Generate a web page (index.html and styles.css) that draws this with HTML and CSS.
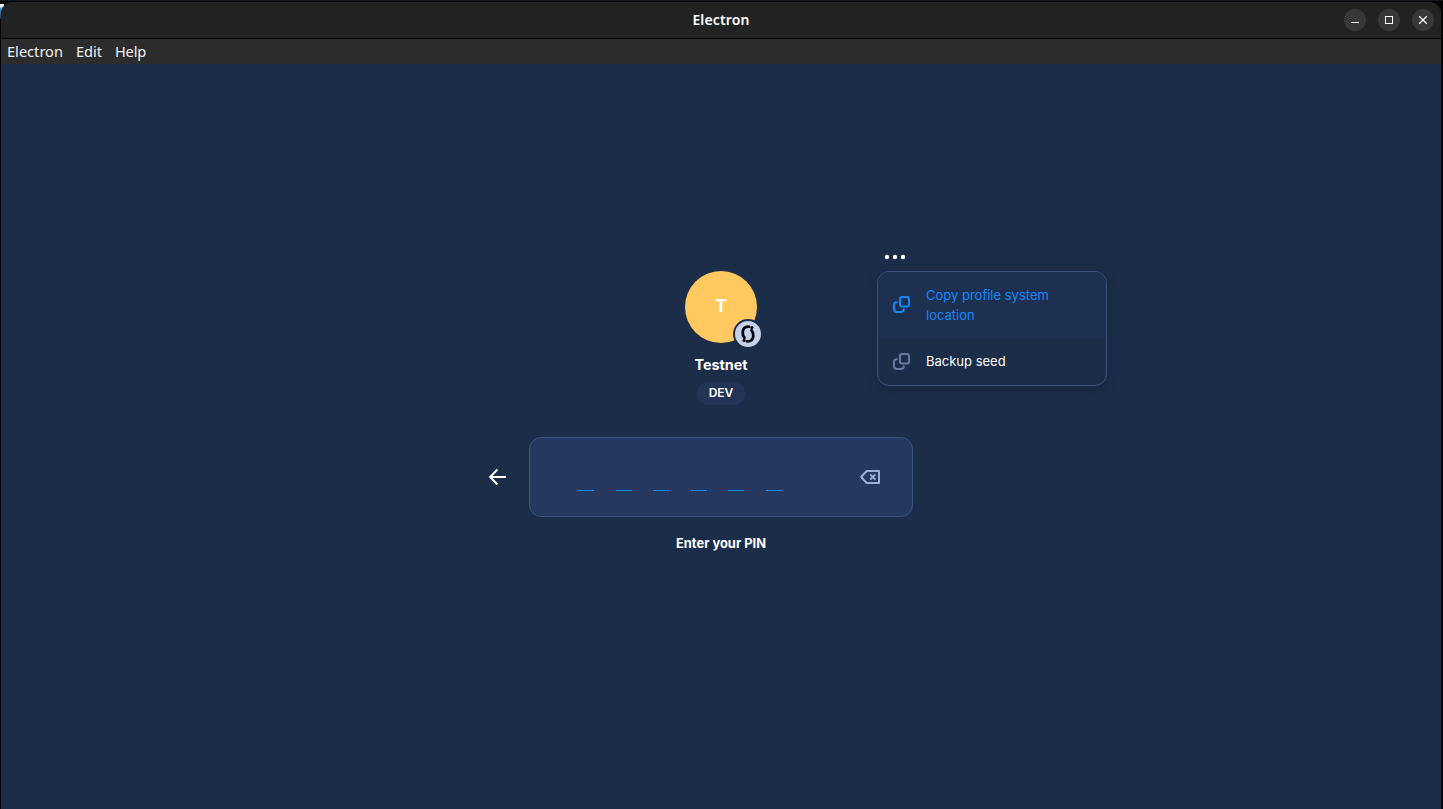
FILE: index.html
```html
<!DOCTYPE html>
<html lang="en">
<head>
<meta charset="utf-8">
<title>Electron</title>
<link rel="stylesheet" href="styles.css">
</head>
<body>
<div class="window">
  <header class="titlebar">
    <div class="titlebar-side"></div>
    <div class="title"><span class="title-text">Electron</span></div>
    <div class="controls">
      <span class="control"><svg width="22" height="22" viewBox="0 0 22 22"><path d="M7 13.5h8" stroke="#fff"/></svg></span>
      <span class="control"><svg width="22" height="22" viewBox="0 0 22 22"><rect x="7.5" y="7.5" width="7" height="7" fill="none" stroke="#fff"/></svg></span>
      <span class="control"><svg width="22" height="22" viewBox="0 0 22 22"><path d="M7.2 7.2l7.6 7.6M14.8 7.2l-7.6 7.6" stroke="#fff" stroke-width="1.3"/></svg></span>
    </div>
  </header>
  <nav class="menubar"><span class="m-electron">Electron</span><span class="m-edit">Edit</span><span class="m-help">Help</span></nav>
  <main class="content">
    <section class="login">
      <div class="profile">
        <div class="avatar">T
          <span class="network"><svg width="26" height="26" viewBox="0 0 26 26"><g fill="none" stroke="#05070c" stroke-width="2.8" stroke-linecap="round"><path d="M13.9 5.6C10 5.4 8 7.6 7.7 11C7.5 13.6 8 15.2 9.5 16.8"/><path d="M12.1 20.4C16 20.6 18 18.4 18.3 15C18.5 12.4 18 10.8 16.5 9.2"/></g><g fill="#05070c"><circle cx="16.9" cy="6.6" r="1.6"/><circle cx="9.1" cy="19.4" r="1.6"/></g></svg></span>
        </div>
        <div class="name">Testnet</div>
        <div class="tag">DEV</div>
        <div class="more">
          <svg class="dots" width="22" height="6" viewBox="0 0 22 6" fill="#fff"><circle cx="3" cy="3" r="2.2"/><circle cx="11" cy="3" r="2.2"/><circle cx="19" cy="3" r="2.2"/></svg>
          <div class="menu">
            <div class="item item-active">
              <svg class="copy" width="17" height="17" viewBox="0 0 17 17"><rect x="7" y="1" width="9" height="9.5" rx="2.2"/><path d="M3.8 6.2C2 6.3 1 7.4 1 9.1V13c0 1.8 1.2 3 3 3h3.8c1.8 0 3-1.1 3-2.8"/></svg>
              <span>Copy profile system location</span>
            </div>
            <div class="item">
              <svg class="copy" width="17" height="17" viewBox="0 0 17 17"><rect x="7" y="1" width="9" height="9.5" rx="2.2"/><path d="M3.8 6.2C2 6.3 1 7.4 1 9.1V13c0 1.8 1.2 3 3 3h3.8c1.8 0 3-1.1 3-2.8"/></svg>
              <span>Backup seed</span>
            </div>
          </div>
        </div>
      </div>
      <div class="pin-row">
        <svg width="18" height="18" viewBox="0 0 18 18" fill="none" stroke="#fff" stroke-width="2"><path d="M17 9H1.5M8.4 1.5L1.1 9l7.3 7.5"/></svg>
        <div class="pin">
          <div class="digits"><i></i><i></i><i></i><i></i><i></i><i></i></div>
          <svg width="20" height="14" viewBox="0 0 20 14" fill="none" stroke="#9dafd4" stroke-width="2" stroke-linejoin="round"><path d="M6.7 1H19v12H6.7L1.1 7z"/><path d="M10.2 4.4l5.2 5.2M15.4 4.4l-5.2 5.2"/></svg>
        </div>
      </div>
      <div class="hint">Enter your PIN</div>
    </section>
  </main>
</div>
</body>
</html>
```

FILE: styles.css
```css
* { box-sizing: border-box; }
body {
  margin: 0;
  height: 809px;
  padding: 2px 2px 0 1px;
  overflow: hidden;
  background:
    linear-gradient(#e4eaee 0 3px, #4c9cd0 4px, #17334a 15px) 0 4px / 4px 15px no-repeat,
    linear-gradient(#10151b 0 1px, #020304 1px);
  font-family: Inter, sans-serif;
  color: #fff;
}
.window {
  display: flex;
  flex-direction: column;
  height: 807px;
  overflow: hidden;
  border-radius: 12px 12px 0 0;
  background: #1c2d4a;
}
.titlebar {
  display: grid;
  grid-template-columns: 1fr auto 1fr;
  align-items: center;
  height: 37px;
  flex: none;
  background: #222;
  border-bottom: 1px solid #000;
}
.title {
  display: flex;
  justify-content: center;
  width: 100px;
  font: 600 14px/20px "Noto Sans", sans-serif;
  letter-spacing: .15px;
}
.controls { display: flex; justify-content: flex-end; gap: 12px; padding-right: 7px; }
.control { width: 22px; height: 22px; border-radius: 50%; background: #383838; }
.control svg { display: block; }
.menubar {
  display: flex;
  flex: none;
  height: 25px;
  padding-left: 6px;
  background: #2c2c2c;
  color: #f2f2f2;
  font: 14.6px/25px "Noto Sans", sans-serif;
}
.m-electron { width: 69px; }
.m-edit { width: 39px; }
.m-help { letter-spacing: -.2px; }
.content { flex: 1; display: flex; justify-content: center; padding-top: 207px; }
.login { display: flex; flex-direction: column; align-items: center; width: 384px; }
.profile { position: relative; display: flex; flex-direction: column; align-items: center; width: 100%; }
.avatar {
  position: relative;
  width: 72px;
  height: 72px;
  border-radius: 50%;
  background: #ffc95f;
  text-align: center;
  font-size: 18px;
  font-weight: 700;
  line-height: 70px;
}
.network {
  position: absolute;
  left: 48px;
  top: 48px;
  width: 30px;
  height: 30px;
  border: 2px solid #1c2d4a;
  border-radius: 50%;
  background: #c5d1e8;
}
.network svg { display: block; }
.name { margin-top: 10px; font-size: 14.4px; font-weight: 700; line-height: 24px; }
.tag {
  margin-top: 5px;
  width: 48px;
  height: 23px;
  border-radius: 12px;
  background: #243456;
  text-align: center;
  font-size: 12px;
  font-weight: 600;
  line-height: 22px;
}
.more { position: absolute; left: 348px; top: -17px; }
.dots { display: block; margin-left: 7px; }
.menu {
  display: flex;
  flex-direction: column;
  width: 230px;
  height: 115px;
  margin-top: 11px;
  overflow: hidden;
  border: 1px solid #3d5380;
  border-radius: 12px;
  background: #1c2d4a;
  box-shadow: 0 4px 12px rgba(8, 16, 35, .22);
  font-size: 13px;
  line-height: 20px;
}
.item { display: flex; flex: 1; align-items: center; gap: 16px; padding: 0 34px 1px 15px; }
.item-active { flex: 0 0 66px; background: #1d304f; color: #1688fb; }
.copy { flex: none; fill: none; stroke: #687aa2; stroke-width: 2; stroke-linecap: round; }
.item-active .copy { stroke: #1688fb; }
.pin-row { display: flex; align-items: center; gap: 22px; margin: 32px 0 0 -40px; }
.pin {
  display: flex;
  align-items: center;
  justify-content: space-between;
  width: 384px;
  height: 80px;
  padding: 0 32px 0 48px;
  border: 1px solid #3d5380;
  border-radius: 12px;
  background: #25385f;
}
.digits { display: flex; gap: 21.6px; padding-top: 26px; }
.digits i { width: 16px; height: 1px; background: #1688fb; }
.hint { margin-top: 17px; font-size: 12.9px; font-weight: 700; line-height: 20px; }
```
